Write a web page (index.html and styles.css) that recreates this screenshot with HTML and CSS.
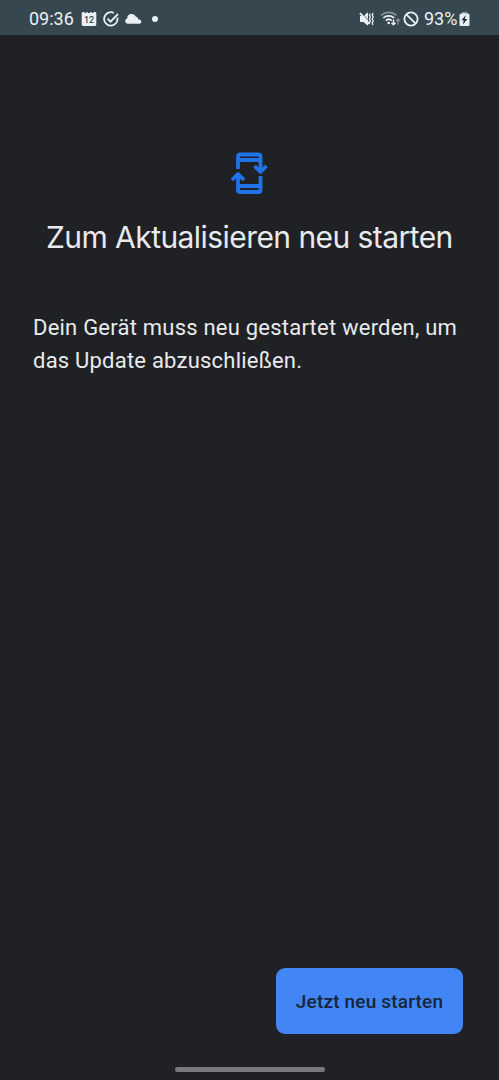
FILE: index.html
```html
<!DOCTYPE html>
<html lang="de">
<head>
<meta charset="utf-8">
<title>Zum Aktualisieren neu starten</title>
<link rel="stylesheet" href="styles.css">
</head>
<body>
<header class="status">
  <div class="status-left">
    <span class="clock">09:36</span>
    <svg class="calendar" width="16" height="16" viewBox="0 0 16 16"><path fill="#e9f1f4" d="M2 1h1.600v1h1.800V1h1.400v1h2.400V1h1.400v1h1.800V1H14q1.300 0 1.300 1.400v11.200q0 1.400-1.400 1.400H2.100Q.7 15 .7 13.600V2.400Q.7 1 2 1z"/><text class="day" x="8" y="11.500" text-anchor="middle">12</text></svg>
    <svg class="check" width="16" height="16" viewBox="0 0 16 16" fill="none" stroke="#e9f1f4" stroke-width="1.800"><path d="M10.800 1.900A6.700 6.700 0 1 0 14.400 6.600M4.500 7.600l3 3L15 3"/></svg>
    <svg class="cloud" width="18" height="12" viewBox="0 0 18 12"><path fill="#e9f1f4" d="M3.600 10.800A2.700 2.700 0 0 1 3.200 5.500 4.500 4.500 0 0 1 11.800 3.600a3.500 3.500 0 0 1 2.600 3A2.200 2.200 0 0 1 15.800 10.800z"/></svg>
    <span class="dot"></span>
  </div>
  <div class="status-right">
    <svg class="mute" width="16" height="16" viewBox="0 0 16 16"><path fill="#e9f1f4" d="M1 5h3.400L9 1.200v13.600L4.400 11H1z"/><path d="M3 1.800l7.500 8.700" stroke="#37474f" stroke-width=".8"/><path d="M1 2l9.500 11" stroke="#e9f1f4" stroke-width="1.900"/><path d="M11.300 2.500l-.9 1.500.9 2-.9 2 .9 2-.9 2M14.200 2l-1 2 1 2-1 2 1 2-1 2 .8 2" fill="none" stroke="#e9f1f4" stroke-width="1.300"/></svg>
    <svg class="wifi" width="21" height="17" viewBox="0 0 21 17" fill="none"><path d="M1 5.500a11 11 0 0 1 15.500 0" stroke="#81909a" stroke-width="1.700"/><path d="M3.300 8a8 8 0 0 1 11 0M5.800 10.600a4.500 4.500 0 0 1 6 0" stroke="#e9f1f4" stroke-width="1.700"/><circle cx="8.700" cy="13" r="1.300" fill="#e9f1f4"/><path d="M13.500 9.500v5M11.500 12.800l2 2 2-2" stroke="#e9f1f4" stroke-width="1.400"/><path d="M18 14.500v-5M16.200 11l1.800-2 1.800 2" stroke="#81909a" stroke-width="1.300"/></svg>
    <svg class="blocked" width="16" height="16" viewBox="0 0 16 16" fill="none" stroke="#e9f1f4" stroke-width="1.800"><circle cx="8" cy="8" r="6.600"/><path d="M3.300 3.300l9.400 9.400"/></svg>
    <span class="percent">93%</span>
    <svg class="battery" width="11" height="16" viewBox="0 0 11 16"><path fill="#93a1a8" d="M3 1h5v3H3z"/><rect x=".5" y="2.500" width="10" height="12.500" rx="1.500" fill="#e9f1f4"/><path d="M6.700 4L2.500 9.200h2.200l-.8 4.400 4.600-5.500H6z" fill="#26333a"/></svg>
  </div>
</header>
<main class="content">
  <svg class="restart" width="40" height="44" viewBox="0 0 40 44" fill="none" stroke="#1f74e8" stroke-width="3.800" stroke-linejoin="round"><path d="M8 18V5.500q0-2 2-2h18.500q2 0 2 2v15M8 9h22.500M30.500 25v14q0 2-2 2H10q-2 0-2-2V24M8 35h22.500"/><path d="M24.500 15l6 6 6-6M2 29l6-6 6 6"/></svg>
  <h1 class="title">Zum Aktualisieren neu starten</h1>
  <p class="message">Dein Gerät muss neu gestartet werden, um das Update abzuschließen.</p>
  <button class="action" type="button">Jetzt neu starten</button>
</main>
<footer class="navigation"><span class="handle"></span></footer>
</body>
</html>
```
FILE: styles.css
```css
* { box-sizing: border-box; }
body {
  margin: 0;
  height: 1080px;
  display: flex;
  flex-direction: column;
  background: #202125;
  color: #e8eaed;
  font-family: Roboto, "Liberation Sans", sans-serif;
}
svg { display: block; flex: none; }
.status {
  height: 35px;
  padding: 2px 29px 0 29px;
  display: flex;
  justify-content: space-between;
  background: #37474f;
  color: #e9f1f4;
  font-size: 18px;
}
.status-left, .status-right { display: flex; align-items: center; }
.clock { width: 52px; white-space: nowrap; }
.day { font: 500 9px Roboto, sans-serif; fill: #37474f; }
.check { margin-left: 6px; }
.cloud { margin-left: 5px; }
.dot { width: 6px; height: 6px; margin-left: 10px; border-radius: 50%; background: #e9f1f4; }
.wifi { margin-left: 5px; }
.blocked { margin-left: 2px; }
.percent { margin-left: 5px; width: 35px; }
.content {
  flex: 1;
  display: flex;
  flex-direction: column;
  padding: 116px 36px 0 33px;
}
.restart { margin-left: 197px; }
.title {
  margin: 22px -8px 0 13px;
  font: 400 30px/40px Inter, "Open Sans", sans-serif;
  letter-spacing: -0.560px;
  white-space: nowrap;
}
.message {
  margin: 54px -4px 0 0;
  font-size: 22px;
  line-height: 33px;
  letter-spacing: 0.220px;
}
.action {
  width: 187px;
  height: 66px;
  margin-top: auto;
  align-self: flex-end;
  padding: 0;
  border: 0;
  border-radius: 9px;
  background: #4285f4;
  color: #182538;
  font: 500 19px Roboto, "Liberation Sans", sans-serif;
  letter-spacing: 0.180px;
  white-space: nowrap;
}
.navigation { height: 46px; display: flex; justify-content: center; align-items: flex-end; padding-bottom: 8px; }
.handle { width: 150px; height: 5px; border-radius: 3px; background: #77797c; }
```
